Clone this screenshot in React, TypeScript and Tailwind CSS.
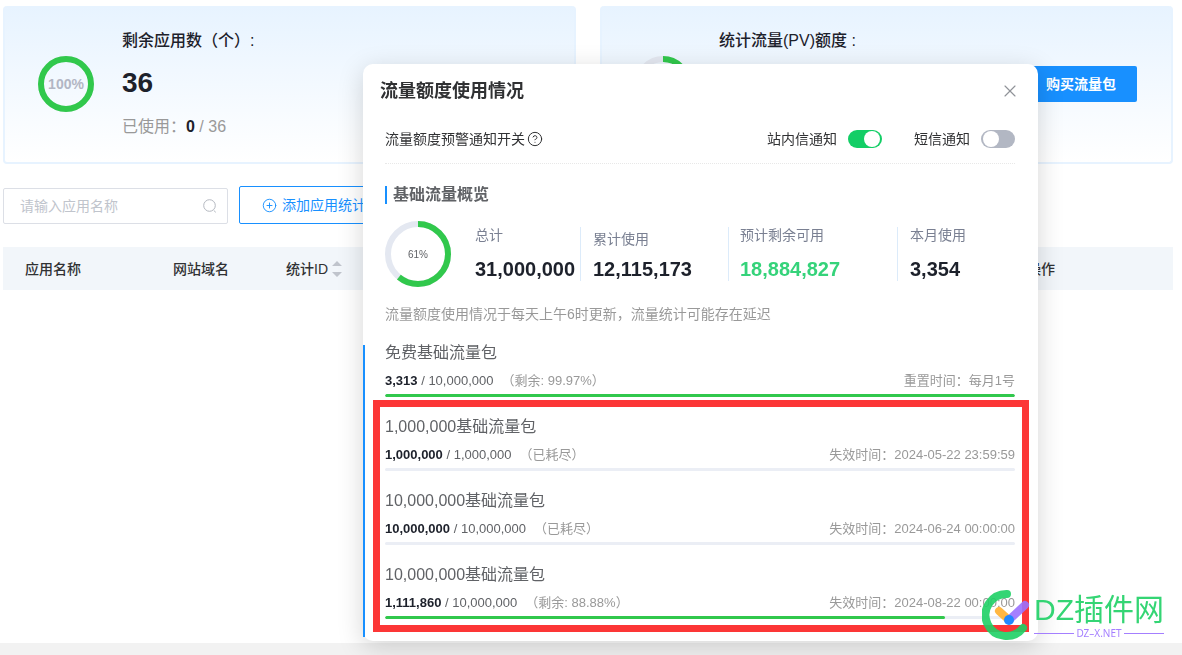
import { CircleHelp, CirclePlus, X } from 'lucide-react';

type RingProps = {
  size: number;
  stroke: number;
  percent: number;
  label: string;
  labelClass: string;
};

const stats = [
  { label: '总计', value: '31,000,000', box: 'w-[106px] border-r', labelClass: 'leading-4', valueClass: 'text-[#1d212b]' },
  { label: '累计使用', value: '12,115,173', box: 'w-[148px] border-r pl-3', labelClass: 'leading-6', valueClass: 'text-[#1d212b]' },
  { label: '预计剩余可用', value: '18,884,827', box: 'w-[169px] border-r pl-[11px]', labelClass: 'leading-4', valueClass: 'text-[#35d37a]' },
  { label: '本月使用', value: '3,354', box: 'flex-1 pl-3', labelClass: 'leading-4', valueClass: 'text-[#1d212b]' },
];

const freePack = {
  name: '免费基础流量包',
  used: '3,313',
  total: '10,000,000',
  state: '（剩余: 99.97%）',
  time: '重置时间：每月1号',
  percent: 99.97,
};

const paidPacks = [
  { name: '1,000,000基础流量包', used: '1,000,000', total: '1,000,000', state: '（已耗尽）', time: '失效时间：2024-05-22 23:59:59', percent: 0 },
  { name: '10,000,000基础流量包', used: '10,000,000', total: '10,000,000', state: '（已耗尽）', time: '失效时间：2024-06-24 00:00:00', percent: 0 },
  { name: '10,000,000基础流量包', used: '1,111,860', total: '10,000,000', state: '（剩余: 88.88%）', time: '失效时间：2024-08-22 00:00:00', percent: 88.88 },
];

const Ring = ({ size, stroke, percent, label, labelClass }: RingProps) => {
  const r = (size - stroke) / 2;
  const c = size / 2;
  return (
    <div className="grid shrink-0 place-items-center">
      <svg width={size} height={size} className="col-start-1 row-start-1 -rotate-90">
        <circle cx={c} cy={c} r={r} fill="none" stroke="#e4e8f1" strokeWidth={stroke} />
        <circle
          cx={c}
          cy={c}
          r={r}
          fill="none"
          stroke="#31c84c"
          strokeWidth={stroke}
          pathLength={100}
          strokeDasharray={`${percent} 100`}
        />
      </svg>
      <span className={`col-start-1 row-start-1 ${labelClass}`}>{label}</span>
    </div>
  );
};

const Toggle = ({ label, on }: { label: string; on?: boolean }) => (
  <label className="flex items-center gap-[11px] text-sm leading-5 text-[#303133]">
    {label}
    <input
      type="checkbox"
      role="switch"
      defaultChecked={on}
      className="flex h-[18px] w-[34px] appearance-none items-center rounded-full bg-[#b2b7c3] px-[2px] before:size-4 before:rounded-full before:bg-white checked:justify-end checked:bg-[#13ce66]"
    />
  </label>
);

const Pack = ({ name, used, total, state, time, percent }: typeof freePack) => (
  <li>
    <h4 className="text-base leading-4 text-[#606266]">{name}</h4>
    <div className="mt-3 mb-[5px] flex justify-between text-[13px] leading-4 whitespace-nowrap text-[#999]">
      <p>
        <b className="text-[#1d212b]">{used}</b>
        <span className="text-[#606266]"> / {total}</span>
        <span className="ml-2">{state}</span>
      </p>
      <p>{time}</p>
    </div>
    <div className="h-[3px] overflow-hidden rounded-full bg-[#ebeef5]">
      <div className="h-full rounded-full bg-[#31c84c]" style={{ width: `${percent}%` }} />
    </div>
  </li>
);

const QuotaDialog = () => (
  <div className="fixed inset-0 flex items-start justify-center pt-16 pl-[219px]">
    <section
      role="dialog"
      aria-labelledby="quota-title"
      className="w-full max-w-[675px] rounded-[10px] bg-white pb-1 shadow-[0_6px_26px_rgba(0,0,0,0.17)]"
    >
      <header className="flex items-center justify-between pt-[15px] pr-[18px] pl-[17px]">
        <h2 id="quota-title" className="text-lg leading-6 font-bold text-[#303133]">流量额度使用情况</h2>
        <button type="button" aria-label="关闭" className="text-[#909399]">
          <X size={20} strokeWidth={1.4} />
        </button>
      </header>

      <div className="pr-[23px] pl-[22px]">
        <div className="mt-[26px] flex items-center border-b border-dotted border-[#e8e8e8] pb-[14px]">
          <p className="flex flex-1 items-center gap-[2px] text-sm leading-5 text-[#303133]">
            流量额度预警通知开关
            <CircleHelp size={16} strokeWidth={1.5} />
          </p>
          <div className="flex gap-8">
            <Toggle label="站内信通知" on />
            <Toggle label="短信通知" />
          </div>
        </div>

        <h3 className="mt-[22px] border-l-2 border-[#1890ff] pl-[6px] text-base leading-[18px] font-bold text-[#606266]">
          基础流量概览
        </h3>

        <div className="mt-[17px] flex items-center gap-6">
          <Ring size={66} stroke={6} percent={61} label="61%" labelClass="text-[10px] text-[#606266]" />
          <dl className="flex h-[54px] flex-1">
            {stats.map((item) => (
              <div key={item.label} className={`flex flex-col justify-between border-[#dcebfa] ${item.box}`}>
                <dt className={`text-sm text-[#7a8092] ${item.labelClass}`}>{item.label}</dt>
                <dd className={`text-xl leading-6 font-bold ${item.valueClass}`}>{item.value}</dd>
              </div>
            ))}
          </dl>
        </div>

        <p className="mt-[17px] text-sm leading-5 text-[#999]">流量额度使用情况于每天上午6时更新，流量统计可能存在延迟</p>
      </div>

      <div className="mt-[21px] border-l-2 border-[#1890ff] pr-[9px] pb-[5px] pl-2">
        <ul className="pr-[14px] pl-3">
          <Pack {...freePack} />
        </ul>
        <ul className="mt-[3px] flex flex-col gap-[22px] border-[7px] border-[#fc3636] pt-3 pr-[7px] pb-[6px] pl-[5px]">
          {paidPacks.map((pack) => (
            <Pack key={pack.time} {...pack} />
          ))}
        </ul>
      </div>
    </section>
  </div>
);

const Watermark = () => (
  <div className="pointer-events-none fixed right-[18px] bottom-[14px] flex items-center gap-1 opacity-90">
    <svg width="48" height="52" viewBox="0 0 48 52" fill="none" strokeLinecap="round">
      <path d="M25 5A21 21 0 1 0 41 39" stroke="#1fd165" strokeWidth="8" />
      <path d="M17 22L27 31" stroke="#ffb02e" strokeWidth="8" />
      <path d="M43 16L27 31" stroke="#9b72ff" strokeWidth="8" />
      <circle cx="27" cy="31" r="5" fill="#0b7cff" />
    </svg>
    <div>
      <p className="text-[30px] leading-9 text-[#1fd165]">DZ插件网</p>
      <p className="flex items-center gap-[2px] font-['Noto_Sans',sans-serif] text-[10px] leading-[10px] text-[#9b72ff]">
        <span className="h-px flex-1 bg-[#9b72ff]" />
        DZ–X.NET
        <span className="h-px flex-1 bg-[#9b72ff]" />
      </p>
    </div>
  </div>
);

const cardClass =
  'flex items-center gap-7 rounded border-2 border-t-0 border-[#e7f3ff] bg-linear-to-b from-[#e7f3ff] to-white pt-[23px] pr-[34px] pb-[23px] pl-[33px]';

const App = () => (
  <div className="flex min-h-screen flex-col bg-[#f2f2f2] pb-3 font-['Liberation_Sans','Noto_Sans_CJK_SC',sans-serif]">
    <main className="flex-1 bg-white pt-[6px] pr-[9px] pl-[3px]">
      <div className="grid grid-cols-2 gap-6">
        <section className={cardClass}>
          <Ring size={56} stroke={6} percent={100} label="100%" labelClass="text-sm font-bold text-[#b2b6c4]" />
          <div>
            <h2 className="text-base leading-6 font-medium text-[#1d212b]">剩余应用数（个）:</h2>
            <p className="mt-[14px] text-[28px] leading-8 font-bold text-[#1d212b]">36</p>
            <p className="mt-4 text-base leading-6 text-[#999]">
              已使用：<b className="text-[#1d212b]">0</b> / 36
            </p>
          </div>
        </section>
        <section className={cardClass}>
          <Ring size={56} stroke={6} percent={61} label="" labelClass="" />
          <h2 className="flex-1 self-start text-base leading-6 font-medium text-[#1d212b]">统计流量(PV)额度 :</h2>
          <button type="button" className="h-9 w-28 rounded-xs bg-[#1890ff] text-sm font-bold text-white">
            购买流量包
          </button>
        </section>
      </div>

      <div className="mt-[22px] flex items-end gap-[11px]">
        <label className="flex h-9 w-[225px] items-center rounded-xs border border-[#dcdfe6] pr-[10px] pl-4">
          <input
            type="text"
            aria-label="应用名称"
            placeholder="请输入应用名称"
            className="min-w-0 flex-1 text-sm text-[#606266] outline-none placeholder:text-[#c0c4cc]"
          />
          <svg width="14" height="14" viewBox="0 0 14 14" fill="none" stroke="#b4b8c0">
            <circle cx="6.5" cy="6.5" r="5.8" />
            <path d="M10.8 11.5L12.8 13.3" />
          </svg>
        </label>
        <button
          type="button"
          className="flex h-[38px] items-center gap-[5px] rounded-xs border border-[#1890ff] px-[22px] text-sm text-[#1890ff]"
        >
          <CirclePlus size={15} strokeWidth={1.5} />
          添加应用统计
        </button>
      </div>

      <table className="mt-[23px] w-full table-fixed text-left text-sm text-[#303133]">
        <thead className="bg-[#f2f6fa]">
          <tr className="h-[43px]">
            <th className="w-[148px] pl-[22px] font-medium">应用名称</th>
            <th className="w-[113px] pl-[22px] font-medium">网站域名</th>
            <th className="pl-[22px] font-medium">
              <span className="flex items-center gap-1">
                统计ID
                <svg width="10" height="16" viewBox="0 0 10 16" fill="#c0c4cc">
                  <path d="M0 5L5 0L10 5ZM0 11L5 16L10 11Z" />
                </svg>
              </span>
            </th>
            <th className="w-[168px] pl-[22px] font-medium">操作</th>
          </tr>
        </thead>
      </table>
    </main>

    <QuotaDialog />
    <Watermark />
  </div>
);

export default App;
